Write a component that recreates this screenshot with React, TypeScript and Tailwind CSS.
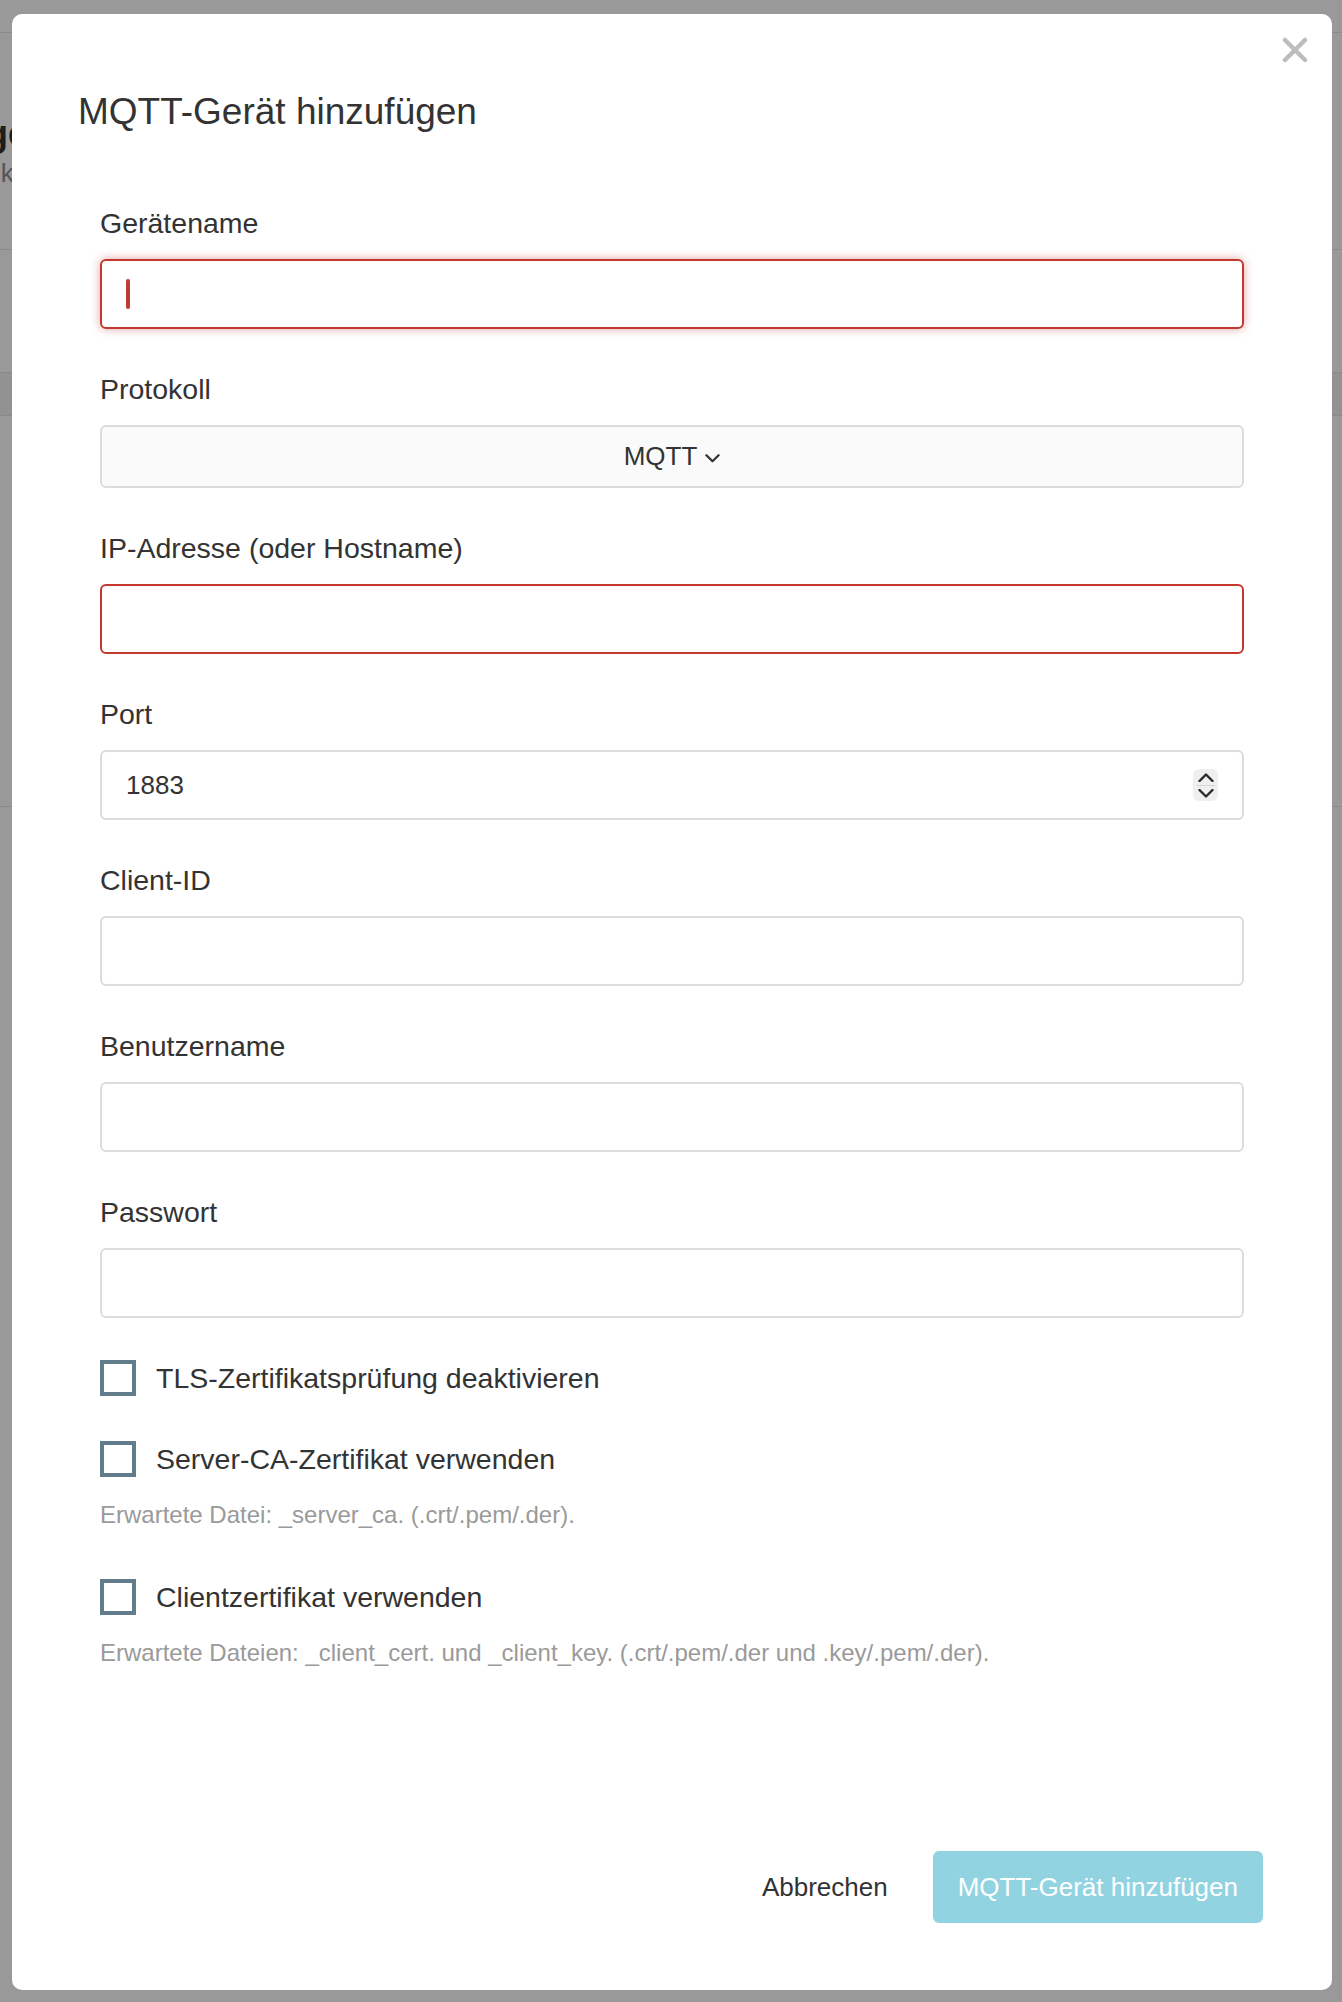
import React from 'react';

const inputShape =
  'h-[70px] w-full rounded-[6px] border-2 bg-white px-[24px] text-[26px] text-[#333] outline-none';
const inputBase = `${inputShape} border-[#dcdcdc]`;
const inputError = `${inputShape} border-[#c4392f]`;

function Field({ label, children }: { label: string; children: React.ReactNode }) {
  return (
    <div className="mb-[40px]">
      <div className="h-[40px] text-[28.5px] leading-[40px] text-[#333]">{label}</div>
      <div className="mt-[16px]">{children}</div>
    </div>
  );
}

function Checkbox({ label }: { label: string }) {
  return (
    <label className="flex h-[40px] items-center gap-[20px]">
      <span className="block h-[36px] w-[36px] border-[4px] border-[#617c8a] bg-white" />
      <span className="text-[28.5px] leading-[40px] text-[#333]">{label}</span>
    </label>
  );
}

function Chevron({ up = false, className = '' }: { up?: boolean; className?: string }) {
  return (
    <svg viewBox="0 0 16 9" className={className} fill="none">
      <path
        d={up ? 'M1.5 8L8 1.5 14.5 8' : 'M1.5 1L8 7.5 14.5 1'}
        stroke="currentColor"
        strokeWidth="2.4"
        strokeLinecap="round"
        strokeLinejoin="round"
      />
    </svg>
  );
}

export default function App() {
  return (
    <div
      className="relative h-[2002px] w-full overflow-hidden bg-[#999999]"
      style={{ fontFamily: '"Liberation Sans", Arial, sans-serif' }}
    >
      {/* page underneath the overlay */}
      <div className="flex flex-col">
        <div className="h-[33px] border-b border-[#8a8a8a]" />
        <div className="h-[217px] border-b border-[#8a8a8a] pt-[79px]">
          <div className="-ml-[14px] text-[36px] font-bold leading-[44px] text-[#1e1e1e]">ge</div>
          <div className="-ml-[5px] mt-[2px] text-[26px] leading-[30px] text-[#555]">lk</div>
        </div>
        <div className="h-[123px] border-b border-[#8a8a8a]" />
        <div className="h-[43px] border-b border-[#8a8a8a] bg-[#929292]" />
        <div className="h-[391px] border-b border-[#8a8a8a]" />
      </div>

      {/* modal */}
      <div className="absolute left-[12px] top-[14px] flex h-[1976px] w-[1320px] flex-col rounded-[10px] bg-white">
        <button className="absolute right-[24px] top-[23px] h-[26px] w-[26px] text-[#bdbdbd]" aria-label="Schließen">
          <svg viewBox="0 0 26 26" className="h-[26px] w-[26px]">
            <path d="M3 3L23 23M23 3L3 23" stroke="currentColor" strokeWidth="4.5" strokeLinecap="round" />
          </svg>
        </button>

        <div className="pl-[66px] pt-[76px]">
          <h1 className="text-[37px] leading-[44px] text-[#333]">MQTT-Gerät hinzufügen</h1>
        </div>

        <div className="mt-[69px] px-[88px]">
          <Field label="Gerätename">
            <div className="flex h-[70px] w-full items-center rounded-[6px] border-2 border-[#c4392f] bg-white px-[24px] shadow-[0_0_10px_rgba(196,57,47,0.45)]">
              <span className="block h-[30px] w-[4px] rounded-[2px] bg-[#c4392f]" />
            </div>
          </Field>

          <Field label="Protokoll">
            <div className="flex h-[63px] w-full items-center justify-center gap-[8px] rounded-[6px] border-2 border-[#dcdcdc] bg-[#fafafa] text-[26px] text-[#333]">
              <span>MQTT</span>
              <Chevron className="mt-[4px] h-[9px] w-[15px]" />
            </div>
          </Field>

          <Field label="IP-Adresse (oder Hostname)">
            <input className={inputError} />
          </Field>

          <Field label="Port">
            <div className="relative">
              <input className={inputBase} defaultValue="1883" readOnly />
              <div className="absolute right-[26px] top-1/2 flex h-[32px] w-[25px] -translate-y-1/2 flex-col items-center justify-center rounded-[6px] bg-[#efefef] text-[#2a2a2a]">
                <Chevron up className="h-[9px] w-[16px]" />
                <span className="my-[3px] block h-[1px] w-[18px] bg-[#d4d4d4]" />
                <Chevron className="h-[9px] w-[16px]" />
              </div>
            </div>
          </Field>

          <Field label="Client-ID">
            <input className={inputBase} />
          </Field>

          <Field label="Benutzername">
            <input className={inputBase} />
          </Field>

          <Field label="Passwort">
            <input className={inputBase} type="password" />
          </Field>

          <Checkbox label="TLS-Zertifikatsprüfung deaktivieren" />
          <div className="mt-[41px]">
            <Checkbox label="Server-CA-Zertifikat verwenden" />
          </div>
          <p className="mt-[19px] text-[24px] leading-[34px] text-[#9a9a9a]">
            Erwartete Datei: _server_ca. (.crt/.pem/.der).
          </p>
          <div className="mt-[45px]">
            <Checkbox label="Clientzertifikat verwenden" />
          </div>
          <p className="mt-[19px] text-[24px] leading-[34px] text-[#9a9a9a]">
            Erwartete Dateien: _client_cert. und _client_key. (.crt/.pem/.der und .key/.pem/.der).
          </p>
        </div>

        <div className="mt-auto flex items-center justify-end gap-[20px] pb-[67px] pr-[69px]">
          <button className="h-[72px] px-[25px] text-[26px] text-[#333]">Abbrechen</button>
          <button className="h-[72px] rounded-[6px] bg-[#92d3e2] px-[25px] text-[26px] text-white">
            MQTT-Gerät hinzufügen
          </button>
        </div>
      </div>
    </div>
  );
}
